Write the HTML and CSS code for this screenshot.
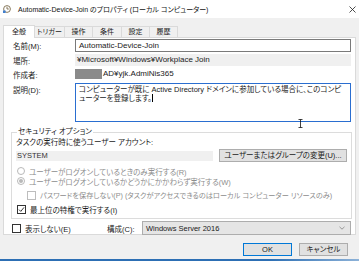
FILE: index.html
```html
<!DOCTYPE html>
<html lang="ja">
<head>
<meta charset="utf-8">
<link rel="stylesheet" href="styles.css">
</head>
<body>
<div class="win">
  <div class="titlebar">
    <svg class="ticon" width="8" height="8" viewBox="0 0 8 8"><circle cx="4" cy="4" r="3.4" fill="#fff" stroke="#7a6a4a" stroke-width="0.9"/><path d="M4 1.8V4h1.8" fill="none" stroke="#7a6a4a" stroke-width="0.9"/><rect x="0" y="5.5" width="2.6" height="2.5" fill="#3f7fd0"/></svg>
    <span class="title">Automatic-Device-Join のプロパティ (ローカル コンピューター)</span>
    <svg class="close" width="7" height="7" viewBox="0 0 7 7"><path d="M0.5 0.5L6.5 6.5M6.5 0.5L0.5 6.5" stroke="#222" stroke-width="0.8"/></svg>
  </div>
  <div class="tabs">
    <div class="tab sel">全般</div>
    <div class="tab">トリガー</div>
    <div class="tab">操作</div>
    <div class="tab">条件</div>
    <div class="tab">設定</div>
    <div class="tab">履歴</div>
  </div>
  <div class="panel">
    <div class="fields">
      <div class="lbl">名前(M):</div>
      <div class="input">Automatic-Device-Join</div>
      <div class="lbl">場所:</div>
      <div class="ro">¥Microsoft¥Windows¥Workplace Join</div>
      <div class="lbl">作成者:</div>
      <div class="author"><span class="redact"></span>AD¥yjk.AdmiNis365</div>
      <div class="lbl">説明(D):</div>
      <div class="textarea">コンピューターが既に Active Directory ドメインに参加している場合に、このコンピューターを登録します。<span class="caret"></span></div>
    </div>
    <fieldset class="group">
      <legend>セキュリティ オプション</legend>
      <div class="gline">タスクの実行時に使うユーザー アカウント:</div>
      <div class="acct">
        <div class="sys">SYSTEM</div>
        <div class="btn chg">ユーザーまたはグループの変更(U)...</div>
      </div>
      <div class="opt dis"><span class="radio"></span>ユーザーがログオンしているときのみ実行する(R)</div>
      <div class="opt dis"><span class="radio on"></span>ユーザーがログオンしているかどうかにかかわらず実行する(W)</div>
      <div class="opt dis ind"><span class="cb"></span>パスワードを保存しない(P) (タスクがアクセスできるのはローカル コンピューター リソースのみ)</div>
      <div class="opt"><span class="cb chk"><svg width="7" height="7" viewBox="0 0 7 7"><path d="M1 3.6L2.8 5.4L6 1.4" fill="none" stroke="#222" stroke-width="0.9"/></svg></span>最上位の特権で実行する(I)</div>
    </fieldset>
    <div class="bottomrow">
      <div class="opt hide"><span class="cb"></span>表示しない(E)</div>
      <div class="cfg">構成(C):</div>
      <div class="select"><span>Windows Server 2016</span><svg width="6" height="4" viewBox="0 0 6 4"><path d="M0.5 0.8L3 3.2L5.5 0.8" fill="none" stroke="#777" stroke-width="0.7"/></svg></div>
    </div>
    <svg class="ibeam" width="5" height="9" viewBox="0 0 5 9"><path d="M0.5 0.5H4.5M2.5 0.5V8.5M0.5 8.5H4.5" fill="none" stroke="#111" stroke-width="0.8"/></svg>
  </div>
  <div class="buttons">
    <div class="btn ok">OK</div>
    <div class="btn">キャンセル</div>
  </div>
  <div class="blueline"></div>
</div>
</body>
</html>
```
FILE: styles.css
```css
html, body {
  margin: 0;
  padding: 0;
}
body {
  width: 359px;
  height: 261px;
  overflow: hidden;
  background: #f0f0f0;
  font-family: "Liberation Sans", "Noto Sans CJK JP", sans-serif;
  font-feature-settings: "palt";
  font-size: 8px;
  color: #1a1a1a;
}
.win {
  display: flex;
  flex-direction: column;
  height: 261px;
}
.titlebar {
  height: 18px;
  background: #fff;
  display: flex;
  align-items: center;
  padding-left: 3px;
}
.ticon { flex: none; }
.title {
  margin-left: 7px;
  font-size: 7px;
  color: #111;
}
.close {
  margin-left: auto;
  margin-right: 3px;
}
.tabs {
  display: flex;
  align-items: flex-end;
  margin-top: 6px;
  height: 13px;
  padding-left: 3px;
}
.tab {
  box-sizing: border-box;
  width: 30px;
  height: 11px;
  line-height: 10px;
  border: 1px solid #dadada;
  border-bottom: none;
  border-left: none;
  background: #f0f0f0;
  font-size: 7px;
  text-align: center;
  white-space: nowrap;
}
.tab:nth-child(3) { width: 28px; }
.tab:nth-child(4) { width: 29px; }
.tab:nth-child(5) { width: 28px; }
.tab:nth-child(6) { width: 28px; }
.tab.sel {
  width: 32px;
  height: 13px;
  line-height: 12px;
  background: #fff;
  border-left: 1px solid #dadada;
  margin-bottom: -1px;
  position: relative;
  z-index: 1;
}
.panel {
  position: relative;
  margin: 0 3px;
  height: 198px;
  box-sizing: border-box;
  background: #fff;
  border: 1px solid #dadada;
  padding: 1px 4px 0 7px;
}
.fields {
  display: grid;
  grid-template-columns: 64px 1fr;
  row-gap: 2px;
  align-items: center;
}
.lbl {
  font-size: 7.5px;
  padding-left: 2px;
}
.input {
  height: 13px;
  box-sizing: border-box;
  border: 1px solid #7a7a7a;
  padding-left: 3px;
  line-height: 11px;
}
.ro {
  height: 12px;
  line-height: 12px;
  background: #f0f0f0;
  padding-left: 2px;
}
.author {
  height: 12px;
  line-height: 12px;
  display: flex;
  align-items: center;
}
.redact {
  width: 27px;
  height: 10px;
  background: #8a8a8a;
  margin-right: 1px;
}
.textarea {
  grid-column: 2;
  height: 39px;
  margin-top: 1px;
  box-sizing: border-box;
  border: 1px solid #2a6ed0;
  padding: 1px 3px;
  line-height: 9px;
  font-size: 7.5px;
  align-self: start;
}
.fields .lbl:nth-last-child(2) {
  align-self: start;
  padding-top: 2px;
}
.caret {
  display: inline-block;
  width: 1px;
  height: 8px;
  background: #000;
  vertical-align: -1px;
}
.group {
  margin: 6px 0 0 0;
  width: 341px;
  box-sizing: border-box;
  border: 1px solid #dcdcdc;
  padding: 2px 0 3px 4px;
  height: 91px;
}
.group legend {
  font-size: 7.5px;
  padding: 0 1px;
  margin-left: 1px;
  line-height: 8px;
}
.gline {
  font-size: 7.5px;
  line-height: 9px;
}
.acct {
  display: flex;
  align-items: center;
  margin-top: 2px;
}
.sys {
  width: 196px;
  height: 10px;
  line-height: 10px;
  background: #f0f0f0;
  padding-left: 1px;
  font-size: 7.5px;
  color: #333;
}
.btn {
  box-sizing: border-box;
  height: 13px;
  line-height: 11px;
  border: 1px solid #adadad;
  background: #e1e1e1;
  text-align: center;
  font-size: 7.5px;
}
.chg {
  margin-left: 6px;
  width: 128px;
}
.opt {
  display: flex;
  align-items: center;
  height: 10px;
  font-size: 7.5px;
  white-space: nowrap;
}
.acct + .opt { margin-top: 4px; }
.opt.dis { color: #8d8d8d; }
.opt.ind {
  padding-left: 10px;
  margin-top: 4px;
  font-size: 7.2px;
}
.opt.ind + .opt { margin-top: 4px; }
.radio {
  width: 6px;
  height: 6px;
  border: 1px solid #b9b9b9;
  border-radius: 50%;
  margin: 0 4px 0 1px;
  display: flex;
  align-items: center;
  justify-content: center;
}
.radio.on::after {
  content: "";
  width: 4px;
  height: 4px;
  border-radius: 50%;
  background: #b9b9b9;
}
.cb {
  width: 7px;
  height: 7px;
  border: 1px solid #bdbdbd;
  margin: 0 4px 0 1px;
  display: flex;
  align-items: center;
  justify-content: center;
  background: #fff;
}
.cb.chk { border-color: #333; }
.bottomrow {
  display: flex;
  align-items: center;
  margin-top: 2px;
  height: 14px;
}
.hide { width: 96px; }
.hide .cb { border-color: #333; }
.cfg {
  width: 35px;
  font-size: 7.5px;
}
.select {
  width: 209px;
  height: 14px;
  box-sizing: border-box;
  border: 1px solid #adadad;
  background: #e5e5e5;
  display: flex;
  align-items: center;
  justify-content: space-between;
  padding: 0 5px 0 3px;
  font-size: 7.5px;
}
.ibeam {
  position: absolute;
  left: 294px;
  top: 81px;
}
.buttons {
  display: flex;
  justify-content: flex-end;
  gap: 7px;
  margin-top: 8px;
  padding-right: 11px;
}
.buttons .btn {
  width: 49px;
}
.btn.ok {
  border: 1px solid #0078d7;
}
.blueline {
  margin-top: auto;
  height: 2px;
  background: linear-gradient(90deg, #2d6fb4 0%, #2d6fb4 75%, #8db2d8 100%);
}
```
